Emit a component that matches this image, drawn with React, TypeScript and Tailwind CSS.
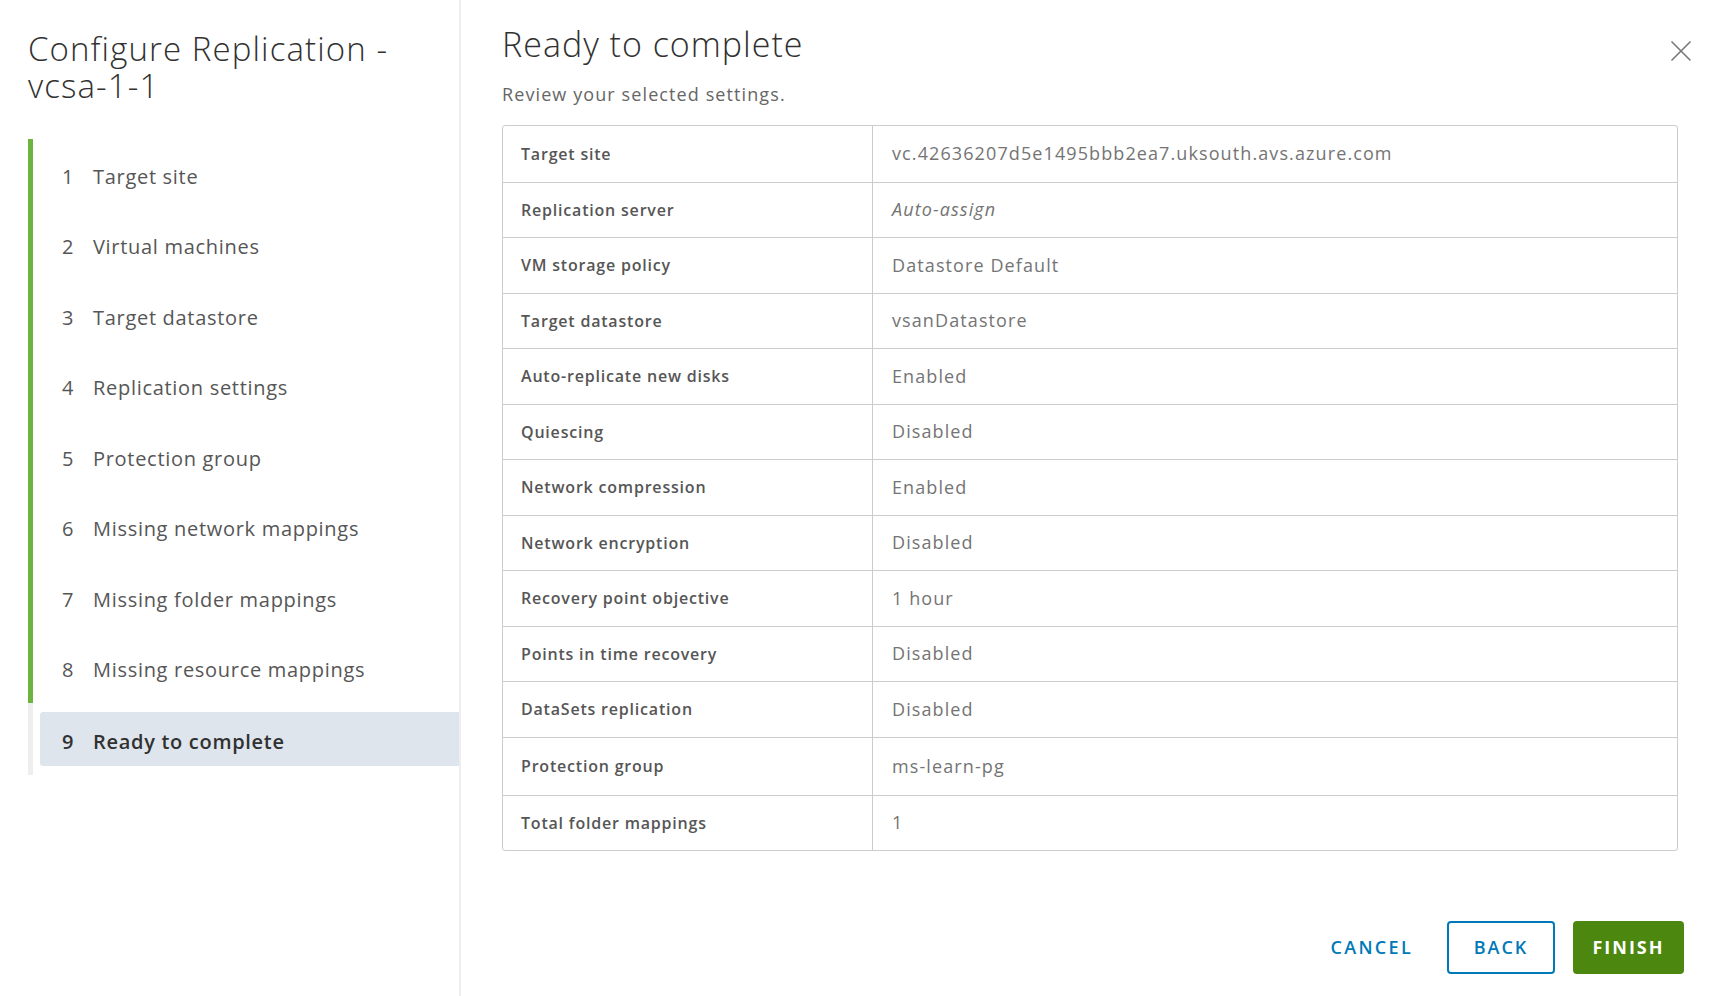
import { X } from 'lucide-react';

const steps = [
    'Target site',
    'Virtual machines',
    'Target datastore',
    'Replication settings',
    'Protection group',
    'Missing network mappings',
    'Missing folder mappings',
    'Missing resource mappings',
    'Ready to complete',
];

const rows: { label: string; value: string; italic?: boolean; tall?: boolean }[] = [
    { label: 'Target site', value: 'vc.42636207d5e1495bbb2ea7.uksouth.avs.azure.com' },
    { label: 'Replication server', value: 'Auto-assign', italic: true },
    { label: 'VM storage policy', value: 'Datastore Default' },
    { label: 'Target datastore', value: 'vsanDatastore' },
    { label: 'Auto-replicate new disks', value: 'Enabled' },
    { label: 'Quiescing', value: 'Disabled' },
    { label: 'Network compression', value: 'Enabled' },
    { label: 'Network encryption', value: 'Disabled' },
    { label: 'Recovery point objective', value: '1 hour' },
    { label: 'Points in time recovery', value: 'Disabled' },
    { label: 'DataSets replication', value: 'Disabled' },
    { label: 'Protection group', value: 'ms-learn-pg', tall: true },
    { label: 'Total folder mappings', value: '1' },
];

const App = () => {
    return (
        <div className="w-[1711px] h-[996px] flex bg-white font-['Open_Sans','Lato',sans-serif] overflow-hidden">
            {/* Sidebar */}
            <aside className="w-[461px] shrink-0 border-r-2 border-[#eeeeee] flex flex-col">
                <h1 className="pl-[28px] pt-[30px] text-[33px] leading-[37px] font-light text-[#313131] pr-4 tracking-[1.1px]">
                    <span className="block">Configure Replication -</span>
                    <span className="block">vcsa-1-1</span>
                </h1>

                <ol className="mt-[35px] pl-[28px]">
                    {steps.map((step, i) => {
                        const active = i === steps.length - 1;
                        return (
                            <li key={step} className={`flex ${active ? 'h-[72px]' : 'h-[70.5px]'}`}>
                                <div className={`w-[5px] shrink-0 ${active ? 'bg-[#eeeeee]' : 'bg-[#6db33f]'}`} />
                                <div className="flex-1 pl-[7px] py-[9px]">
                                    <div
                                        className={`h-full flex items-center pl-[22px] pt-[5px] rounded-l-[3px] text-[20px] tracking-[0.7px] ${
                                            active ? 'bg-[#dfe5ec] text-[#313131] font-semibold' : 'text-[#565656]'
                                        }`}
                                    >
                                        <span className="w-[31px]">{i + 1}</span>
                                        <span>{step}</span>
                                    </div>
                                </div>
                            </li>
                        );
                    })}
                </ol>
            </aside>

            {/* Main */}
            <main className="flex-1 flex flex-col pl-[41px] pr-[33px]">
                <div className="flex items-start justify-between pt-[23px]">
                    <h2 className="text-[34px] leading-[42px] font-light text-[#313131] tracking-[1px]">Ready to complete</h2>
                    <button className="mt-[10px] -mr-[21px] text-[#7a7a7a]">
                        <X size={36} strokeWidth={1.1} />
                    </button>
                </div>
                <p className="mt-[13px] text-[18px] leading-[24px] text-[#666666] tracking-[1.1px]">
                    Review your selected settings.
                </p>

                <div className="mt-[19px] border border-[#cccccc] rounded-[3px]">
                    {rows.map((row, i) => (
                        <div
                            key={row.label}
                            className={`grid grid-cols-[370px_1fr] ${row.tall ? 'h-[58px]' : 'h-[55.5px]'} ${
                                i > 0 ? 'border-t border-[#cccccc]' : ''
                            }`}
                        >
                            <div className="flex items-center pl-[18px] border-r border-[#cccccc] text-[16px] font-semibold text-[#565656] tracking-[0.8px]">
                                {row.label}
                            </div>
                            <div
                                className={`flex items-center pl-[19px] text-[18px] text-[#747474] tracking-[1.1px] ${
                                    row.italic ? 'italic' : ''
                                }`}
                            >
                                {row.value}
                            </div>
                        </div>
                    ))}
                </div>

                <div className="mt-auto mb-[22px] flex justify-end items-center gap-[18px] -mr-[6px]">
                    <button className="h-[53px] px-[16px] text-[18px] font-semibold tracking-[2.3px] text-[#0079b8]">
                        CANCEL
                    </button>
                    <button className="h-[53px] w-[108px] border-2 border-[#0079b8] rounded-[4px] text-[18px] font-semibold tracking-[2px] text-[#0079b8]">
                        BACK
                    </button>
                    <button className="h-[53px] w-[111px] bg-[#4c870f] rounded-[4px] text-[18px] font-bold tracking-[2px] text-white">
                        FINISH
                    </button>
                </div>
            </main>
        </div>
    );
};

export default App;
